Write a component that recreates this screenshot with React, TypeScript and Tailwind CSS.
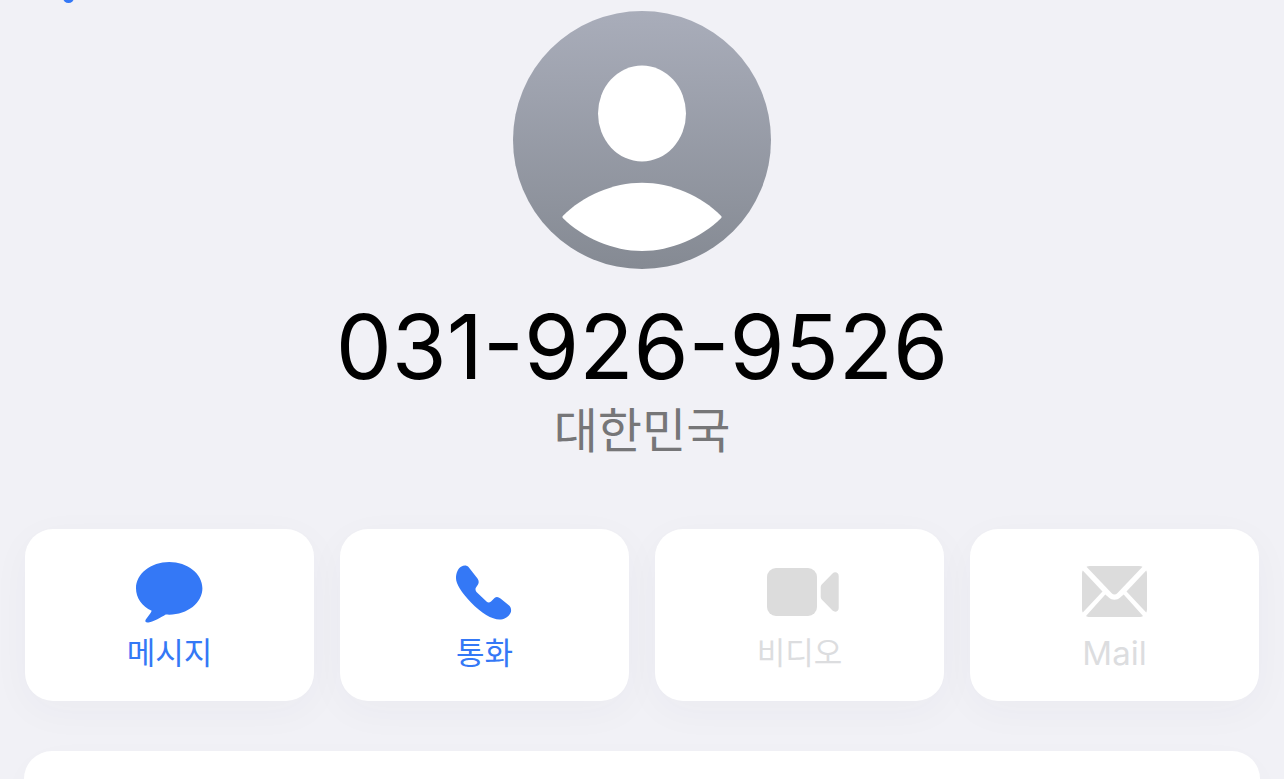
const BLUE = "#3478f6";
const GRAY = "#dcdcdc";

function Bubble() {
  return (
    <svg width="68" height="62" viewBox="0 0 68 62" className="block">
      <path fill={BLUE} d="M33.200 0C51.500 0 66.400 11.800 66.400 26.300S51.500 52.700 33.200 52.700C32 52.700 31 52.700 29.700 52.600C25 55.500 18 59.500 12.500 60.500C10 61 8.500 59.500 9.800 57.500C12 54.500 14.500 51.500 15.700 48.700C6 44.500 0 36 0 26.300C0 11.800 14.900 0 33.200 0Z" />
    </svg>
  );
}

function Phone() {
  return (
    <svg width="56" height="56" viewBox="0 0 56 56" className="block">
      <path fill={BLUE} d="M0 13.300C0 8 2 3.500 5 1.800C8 0 10.500 0 12.500 2L21.500 13.500C23 15.500 23 18 22 19.500L20 22.500C19 24 19.500 26 21 27.500L30.500 36.500C32 38 33.500 37.800 35 36.500L38.500 33C40.500 31.500 42.500 32 44.500 33.500L52.500 40C55 42 55.800 45 54.500 48C52.500 52 48 54.500 43.500 54.500C36 54.500 25 48 15 37.500C5.500 27.500 0 19 0 13.300Z" />
    </svg>
  );
}

function Video() {
  return (
    <svg width="72" height="48" viewBox="0 0 72 48" className="block">
      <rect x="0" y="0" width="50" height="48" rx="9" fill={GRAY} />
      <path fill={GRAY} d="M53.700 19.500C53.700 18 54.200 17 55.200 16L65.500 5.500C67.500 3.500 71.700 4 71.700 8V40C71.700 44 67.500 44.500 65.500 42.500L55.200 32C54.200 31 53.700 30 53.700 28.500Z" />
    </svg>
  );
}

function Mail() {
  return (
    <svg width="65" height="51" viewBox="0 0 65 51" className="block">
      <path fill={GRAY} d="M4.500 .8C5.300 .3 6.500 0 8 0H57C58.500 0 59.700 .3 60.500 .8L35.500 27C33.500 29 31.500 29 29.500 27Z" />
      <path fill={GRAY} d="M.8 4.500L20.500 25.500L.8 46.500C.3 45.500 0 44.500 0 43V8C0 6.500 .3 5.500 .8 4.500Z" />
      <path fill={GRAY} d="M64.200 4.500L44.500 25.500L64.200 46.500C64.700 45.500 65 44.500 65 43V8C65 6.500 64.700 5.500 64.200 4.500Z" />
      <path fill={GRAY} d="M4 50L23.300 28.500L26.800 31.500C30 34.500 35 34.500 38.200 31.500L41.700 28.500L61 50C60 50.700 58.800 51 57 51H8C6.200 51 5 50.700 4 50Z" />
    </svg>
  );
}

function Action({
  icon,
  label,
  labelClass,
  slotClass,
}: {
  icon: React.ReactNode;
  label: string;
  labelClass: string;
  slotClass: string;
}) {
  return (
    <div className="flex h-[172px] flex-1 flex-col items-center rounded-[28px] bg-white shadow-[0_10px_40px_rgba(60,60,90,0.035)]">
      <div className={`flex h-[102px] items-start justify-center ${slotClass}`}>{icon}</div>
      <div className={`leading-[44px] ${labelClass}`}>{label}</div>
    </div>
  );
}

export default function App() {
  return (
    <div
      className="relative flex h-[779px] w-[1284px] flex-col items-center overflow-hidden bg-[#f1f1f6] pt-[11px]"
      style={{ fontFamily: '"Inter", "Noto Sans CJK KR", sans-serif' }}
    >
      <div className="absolute left-[63px] top-[-8px] h-[11px] w-[11px] rounded-full bg-[#3478f6]" />
      <svg width="258" height="258" viewBox="0 0 258 258" className="block shrink-0">
        <defs>
          <linearGradient id="a" x1="0" y1="0" x2="0" y2="1">
            <stop offset="0" stopColor="#a9adba" />
            <stop offset="1" stopColor="#858a93" />
          </linearGradient>
        </defs>
        <circle cx="129" cy="129" r="129" fill="url(#a)" />
        <ellipse cx="129" cy="102.500" rx="44" ry="48" fill="#fff" />
        <path
          fill="#fff"
          d="M49.800 205C70 184.500 100 171.700 129 171.700C158 171.700 188 184.500 208.200 205C208.700 205.600 208.700 206.400 208.200 207C188 227 158 240 129 240C100 240 70 227 49.800 207C49.300 206.400 49.300 205.600 49.800 205Z"
        />
      </svg>
      <div className="mt-[23px] text-[89px] leading-[110px] text-black">031-926-9526</div>
      <div className="mt-px text-[48px] leading-[56px] text-[#767678]">대한민국</div>
      <div className="mt-[70px] flex w-[1234px] gap-[26px]">
        <Action icon={<Bubble />} label="메시지" labelClass="text-[31px] text-[#3478f6]" slotClass="pt-[33px]" />
        <Action icon={<Phone />} label="통화" labelClass="text-[31px] text-[#3478f6]" slotClass="pt-[36px] pr-[2px]" />
        <Action icon={<Video />} label="비디오" labelClass="text-[31px] text-[#dcdddf]" slotClass="pt-[39px] pl-[7px]" />
        <Action icon={<Mail />} label="Mail" labelClass="text-[33px] text-[#dcdddf]" slotClass="pt-[37px]" />
      </div>
      <div className="mt-[50px] h-[100px] w-[1236px] shrink-0 rounded-[28px] bg-white shadow-[0_10px_40px_rgba(60,60,90,0.02)]" />
    </div>
  );
}
